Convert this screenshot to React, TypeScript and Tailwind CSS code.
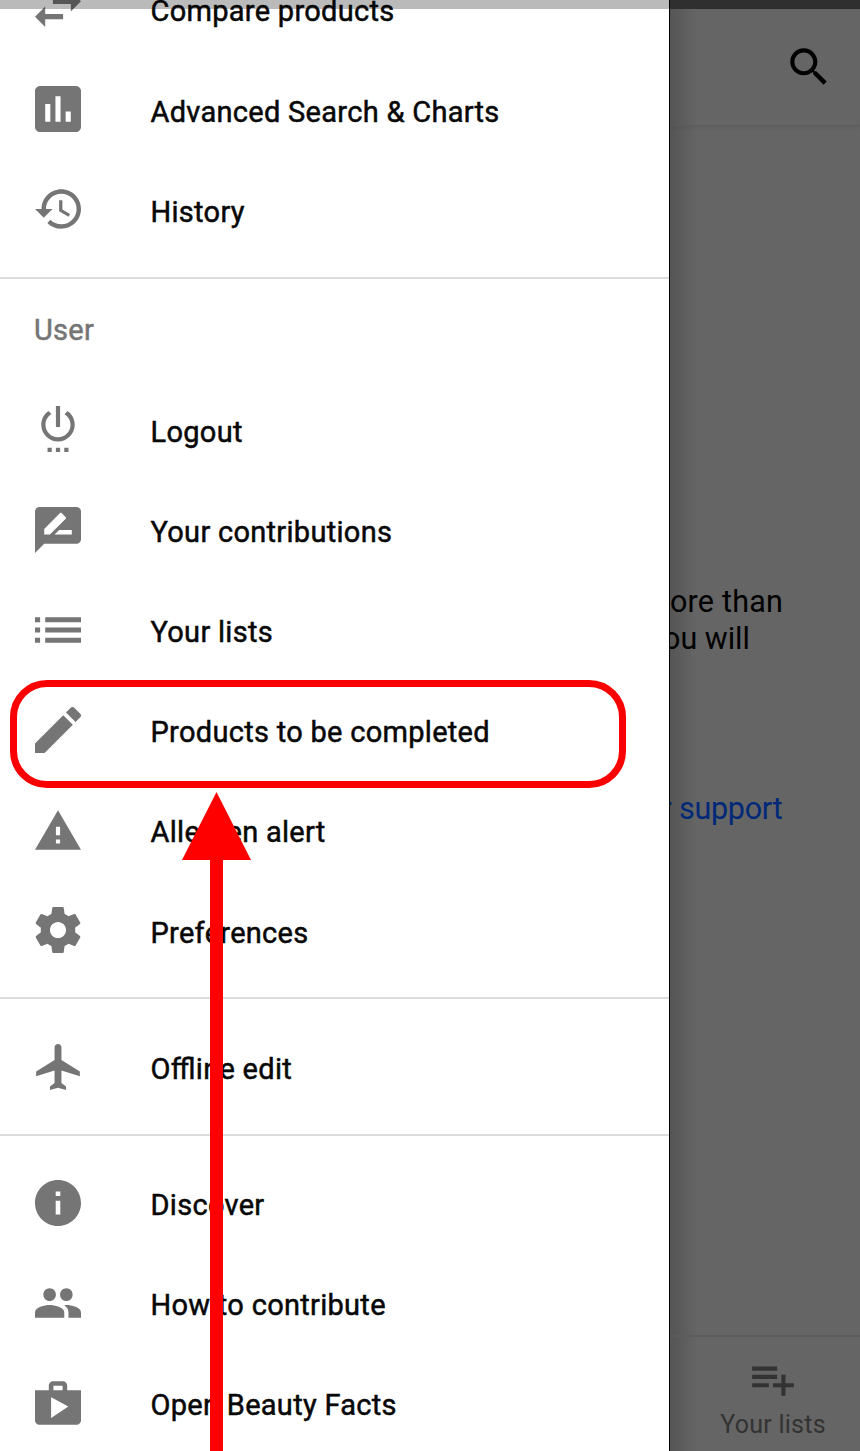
type IconData = { box: string; d: string };

const icons: Record<string, IconData> = {
  swap: { box: "3 3 18 18", d: "M6.99 11L3 15l3.99 4v-3H14v-2H6.99v-3zM21 9l-3.99-4v3H10v2h7.01v3L21 9z" },
  chart: { box: "3 3 18 18", d: "M19 3H5c-1.1 0-2 .9-2 2v14c0 1.1.9 2 2 2h14c1.1 0 2-.9 2-2V5c0-1.1-.9-2-2-2zM9 17H7v-7h2v7zm4 0h-2V7h2v10zm4 0h-2v-4h2v4z" },
  history: { box: "1 1.5 21 21", d: "M13 3c-4.97 0-9 4.03-9 9H1l3.89 3.89.07.14L9 12H6c0-3.87 3.13-7 7-7s7 3.13 7 7-3.13 7-7 7c-1.93 0-3.68-.79-4.94-2.06l-1.42 1.42C8.27 19.99 10.51 21 13 21c4.97 0 9-4.03 9-9s-4.03-9-9-9zm-1 5v5l4.28 2.54.72-1.21-3.5-2.08V8H12z" },
  power: { box: "1 2 22 22", d: "M7 24h2v-2H7v2zm4 0h2v-2h-2v2zm2-22h-2v10h2V2zm3.56 2.44l-1.45 1.45C16.84 6.94 18 8.83 18 11c0 3.31-2.69 6-6 6s-6-2.69-6-6c0-2.17 1.16-4.06 2.88-5.12L7.44 4.44C5.36 5.88 4 8.28 4 11c0 4.42 3.58 8 8 8s8-3.58 8-8c0-2.72-1.36-5.12-3.44-6.56zM15 24h2v-2h-2v2z" },
  review: { box: "2 2 20 20", d: "M20 2H4c-1.1 0-1.99.9-1.99 2L2 22l4-4h14c1.1 0 2-.9 2-2V4c0-1.1-.9-2-2-2zM6 14v-2.47l6.88-6.88c.2-.2.51-.2.71 0l1.77 1.77c.2.2.2.51 0 .71L8.47 14H6zm12 0h-7.5l2-2H18v2z" },
  list: { box: "3 3 18 18", d: "M3 13h2v-2H3v2zm0 4h2v-2H3v2zm0-8h2V7H3v2zm4 4h14v-2H7v2zm0 4h14v-2H7v2zM7 7v2h14V7H7z" },
  edit: { box: "3 3 18 18", d: "M3 17.25V21h3.75L17.81 9.94l-3.75-3.75L3 17.25zM20.71 7.04c.39-.39.39-1.02 0-1.41l-2.34-2.34c-.39-.39-1.02-.39-1.41 0l-1.83 1.83 3.75 3.75 1.83-1.83z" },
  warning: { box: "1 0.5 22 22", d: "M1 21h22L12 2 1 21zm12-3h-2v-2h2v2zm0-4h-2v-4h2v4z" },
  settings: { box: "2 2 20 20", d: "M19.43 12.98c.04-.32.07-.64.07-.98s-.03-.66-.07-.98l2.11-1.65c.19-.15.24-.42.12-.64l-2-3.46c-.12-.22-.39-.3-.61-.22l-2.49 1c-.52-.4-1.08-.73-1.69-.98l-.38-2.65C14.46 2.18 14.25 2 14 2h-4c-.25 0-.46.18-.49.42l-.38 2.65c-.61.25-1.17.59-1.69.98l-2.49-1c-.23-.09-.49 0-.61.22l-2 3.46c-.13.22-.07.49.12.64l2.11 1.65c-.04.32-.07.65-.07.98s.03.66.07.98l-2.11 1.65c-.19.15-.24.42-.12.64l2 3.46c.12.22.39.3.61.22l2.49-1c.52.4 1.08.73 1.69.98l.38 2.65c.03.24.24.42.49.42h4c.25 0 .46-.18.49-.42l.38-2.65c.61-.25 1.17-.59 1.69-.98l2.49 1c.23.09.49 0 .61-.22l2-3.46c.12-.22.07-.49-.12-.64l-2.11-1.65zM12 15.5c-1.93 0-3.5-1.57-3.5-3.5s1.57-3.5 3.5-3.5 3.5 1.57 3.5 3.5-1.57 3.5-3.5 3.5z" },
  plane: { box: "1.5 2 20 20", d: "M21 16v-2l-8-5V3.5c0-.83-.67-1.5-1.5-1.5S10 2.67 10 3.5V9l-8 5v2l8-2.5V19l-2 1.5V22l3.5-1 3.5 1v-1.5L13 19v-5.5l8 2.5z" },
  info: { box: "2 2 20 20", d: "M12 2C6.48 2 2 6.48 2 12s4.48 10 10 10 10-4.48 10-10S17.52 2 12 2zm1 15h-2v-6h2v6zm0-8h-2V7h2v2z" },
  people: { box: "1 1 22 22", d: "M16 11c1.66 0 2.99-1.34 2.99-3S17.66 5 16 5c-1.66 0-3 1.34-3 3s1.34 3 3 3zm-8 0c1.66 0 2.99-1.34 2.99-3S9.66 5 8 5C6.34 5 5 6.34 5 8s1.34 3 3 3zm0 2c-2.33 0-7 1.17-7 3.5V19h14v-2.5c0-2.33-4.67-3.5-7-3.5zm8 0c-.29 0-.62.02-.97.05 1.16.84 1.97 1.97 1.97 3.45V19h6v-2.5c0-2.33-4.67-3.5-7-3.5z" },
  shop: { box: "2 1.5 20 20", d: "M16 6V4c0-1.11-.89-2-2-2h-4c-1.11 0-2 .89-2 2v2H2v13c0 1.11.89 2 2 2h16c1.11 0 2-.89 2-2V6h-6zm-6-2h4v2h-4V4zM9 18V9l7.5 4L9 18z" },
};

function Item({ icon, label }: { icon: string; label: string }) {
  const { box, d } = icons[icon];
  return (
    <li className="flex h-[100.2px] shrink-0 items-center pl-[35px]">
      <svg viewBox={box} className="size-[46px] shrink-0 fill-[#757575]">
        <path d={d} />
      </svg>
      <span className="ml-[69.5px] pt-[4.5px] text-[29px] leading-[34px] tracking-[0.29px] whitespace-nowrap text-[#080808] [-webkit-text-stroke:0.5px_#080808] [font-feature-settings:'liga'_1]">{label}</span>
    </li>
  );
}

function Divider() {
  return <li className="my-[17px] h-[2px] shrink-0 bg-[#dcdcdc]" />;
}

export default function App() {
  return (
    <div className="relative flex h-[1451px] w-[860px] overflow-hidden bg-[#656565] font-['Roboto',sans-serif]">
      <nav className="h-full w-[670px] shrink-0 overflow-hidden border-r border-black bg-white">
        <ul className="-mt-[41px] flex flex-col">
          <Item icon="swap" label="Compare products" />
          <Item icon="chart" label="Advanced Search & Charts" />
          <Item icon="history" label="History" />
          <li className="mt-[17.1px] h-[2px] shrink-0 bg-[#dcdcdc]" />
          <li className="flex h-[100.7px] shrink-0 items-center pt-[3px] pl-[34px] text-[29px] tracking-[0.29px] text-[#757575] [-webkit-text-stroke:0.5px_#757575]">User</li>
          <Item icon="power" label="Logout" />
          <Item icon="review" label="Your contributions" />
          <Item icon="list" label="Your lists" />
          <Item icon="edit" label="Products to be completed" />
          <Item icon="warning" label="Allergen alert" />
          <Item icon="settings" label="Preferences" />
          <Divider />
          <Item icon="plane" label="Offline edit" />
          <Divider />
          <Item icon="info" label="Discover" />
          <Item icon="people" label="How to contribute" />
          <Item icon="shop" label="Open Beauty Facts" />
        </ul>
      </nav>

      <main className="flex h-full w-[190px] flex-col overflow-hidden bg-linear-to-r from-[#555555] to-[#656565] to-[26px]">
        <div className="h-[9px] shrink-0 bg-[#2f2f2f]" />
        <header className="flex h-[117px] shrink-0 justify-end border-b border-[#5c5c5c] pt-[32.5px] pr-[26px] shadow-[0_2px_4px_rgba(0,0,0,0.06)]">
          <svg viewBox="0 0 24 24" className="size-[50px] fill-black">
            <path d="M15.5 14h-.79l-.28-.27C15.41 12.59 16 11.11 16 9.5 16 5.91 13.09 3 9.5 3S3 5.91 3 9.5 5.91 16 9.5 16c1.61 0 3.09-.59 4.23-1.57l.27.28v.79l5 4.99L20.49 19l-4.99-5zm-6 0C7.01 14 5 11.99 5 9.5S7.01 5 9.5 5 14 7.01 14 9.5 11.99 14 9.5 14z" />
          </svg>
        </header>
        <section className="flex-1 pt-[458px] text-[30.5px] leading-[36.5px] whitespace-nowrap text-black">
          <p className="tracking-[0.2px]">ore than</p>
          <p className="-ml-[7px]">ou will</p>
          <p className="mt-[134px] -ml-[8.5px] tracking-[-0.25px] text-[#002878]">r support</p>
        </section>
        <footer className="flex h-[116px] shrink-0 flex-col items-center border-t-2 border-[#5c5c5c] pt-[17px] pl-[16px] text-[#333333]">
          <svg viewBox="0 0 24 24" className="size-[50px] fill-current">
            <path d="M14 10H2v2h12v-2zm0-4H2v2h12V6zm4 8v-4h-2v4h-4v2h4v4h2v-4h4v-2h-4v-2zM2 16h8v-2H2v2z" />
          </svg>
          <span className="mt-[6px] text-[25px] leading-[30px] tracking-[0.25px] whitespace-nowrap">Your lists</span>
        </footer>
      </main>

      <div className="absolute top-0 left-0 h-[9px] w-[669px] bg-black/27" />
      <div className="absolute top-[680px] left-[10px] h-[108px] w-[616px] rounded-[37px] border-[7px] border-[#fa0000]" />
      <svg viewBox="0 0 70 659" className="absolute top-[792px] left-[182px] h-[659px] w-[70px] fill-[#ff0000]">
        <path d="M34.5 0L69 68H41v591H28V68H0z" />
      </svg>
    </div>
  );
}
